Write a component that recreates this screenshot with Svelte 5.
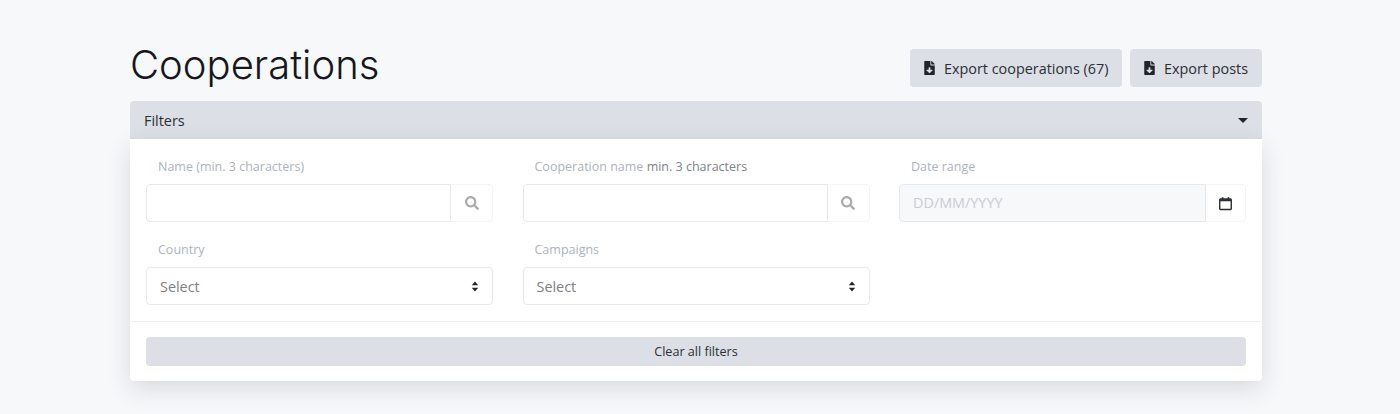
<script>
  const exportButtons = ["Export cooperations (67)", "Export posts"];
</script>

{#snippet fileIcon()}
  <svg class="file-icon" viewBox="0 0 384 512" aria-hidden="true">
    <path d="M224 136V0H24C10.700 0 0 10.700 0 24v464c0 13.300 10.700 24 24 24h336c13.300 0 24-10.700 24-24V160H248c-13.200 0-24-10.800-24-24zm76.450 211.360l-96.420 95.700c-6.650 6.610-17.390 6.610-24.040 0l-96.420-95.700C73.420 337.290 80.540 320 94.820 320H160v-80c0-8.840 7.160-16 16-16h32c8.840 0 16 7.160 16 16v80h65.180c14.280 0 21.400 17.290 11.270 27.360zM377 105L279.100 7c-4.500-4.500-10.600-7-17-7H256v128h128v-6.100c0-6.300-2.500-12.400-7-16.900z" />
  </svg>
{/snippet}

{#snippet searchIcon()}
  <svg class="search-icon" viewBox="0 0 512 512" aria-hidden="true">
    <path d="M505 442.700L405.300 343c-4.500-4.500-10.600-7-17-7H372c27.600-35.300 44-79.700 44-128C416 93.100 322.900 0 208 0S0 93.100 0 208s93.100 208 208 208c48.300 0 92.700-16.400 128-44v16.300c0 6.400 2.500 12.500 7 17l99.700 99.700c9.400 9.400 24.600 9.400 33.900 0l28.300-28.300c9.400-9.400 9.400-24.600.1-34zM208 336c-70.700 0-128-57.200-128-128 0-70.700 57.200-128 128-128 70.700 0 128 57.200 128 128 0 70.700-57.200 128-128 128z" />
  </svg>
{/snippet}

{#snippet sortIcon()}
  <svg class="sort-icon" viewBox="0 0 8 12" aria-hidden="true">
    <path d="M4 0.500 7.500 4.600H0.500zM4 11.500 0.500 7.400H7.500z" />
  </svg>
{/snippet}

<main class="page">
  <header class="top">
    <h1>Cooperations</h1>
    <div class="actions">
      {#each exportButtons as label}
        <button class="export">
          {@render fileIcon()}
          <span>{label}</span>
        </button>
      {/each}
    </div>
  </header>

  <button class="filters-bar">
    <span>Filters</span>
    <i class="caret"></i>
  </button>

  <section class="card">
    <div class="fields">
      <div class="field">
        <span class="label">Name (min. 3 characters)</span>
        <div class="group">
          <div class="input"></div>
          <div class="addon">{@render searchIcon()}</div>
        </div>
      </div>
      <div class="field">
        <span class="label">Cooperation name <em>min. 3 characters</em></span>
        <div class="group">
          <div class="input"></div>
          <div class="addon">{@render searchIcon()}</div>
        </div>
      </div>
      <div class="field">
        <span class="label">Date range</span>
        <div class="group">
          <div class="input disabled">DD/MM/YYYY</div>
          <div class="addon date">
            <svg class="calendar" viewBox="0 0 14 15" aria-hidden="true">
              <path d="M1.500 2.700H12.500A.8.8 0 0 1 13.200 3.500V13.200A.8.8 0 0 1 12.500 14H1.500A.8.8 0 0 1 .8 13.200V3.500A.8.8 0 0 1 1.500 2.700Z" fill="none" stroke="currentColor" stroke-width="1.500" />
              <path d="M1 3H13V5H1ZM3 .8H4.800V3.500H3ZM9.200 .8H11V3.500H9.200Z" fill="currentColor" />
            </svg>
          </div>
        </div>
      </div>
      <div class="field">
        <span class="label">Country</span>
        <div class="select"><span>Select</span>{@render sortIcon()}</div>
      </div>
      <div class="field">
        <span class="label">Campaigns</span>
        <div class="select"><span>Select</span>{@render sortIcon()}</div>
      </div>
    </div>
    <div class="footer">
      <button class="clear">Clear all filters</button>
    </div>
  </section>
</main>

<style>
  :global(body) {
    background: #f7f8fa;
    font-family: "Open Sans", sans-serif;
    color: #212529;
  }

  .page {
    box-sizing: border-box;
    width: 1132px;
    height: 414px;
    margin-left: 130px;
    padding-top: 41px;
  }

  .top {
    display: flex;
    justify-content: space-between;
    align-items: flex-start;
    height: 60px;
  }

  h1 {
    margin: 0;
    font-family: "Inter", sans-serif;
    font-size: 40px;
    line-height: 48px;
    font-weight: 300;
    color: #15171c;
  }

  .actions {
    display: flex;
    gap: 8px;
    padding-top: 8px;
  }

  button {
    border: 0;
    font-family: inherit;
    color: inherit;
    background: #dcdfe6;
    border-radius: 4px;
  }

  .export {
    display: flex;
    align-items: center;
    gap: 8.500px;
    height: 38px;
    padding: 0 14px;
    font-size: 14.400px;
    color: #2b2f35;
  }

  .file-icon {
    width: 11px;
    height: 14px;
    fill: #212529;
  }

  .filters-bar {
    display: flex;
    justify-content: space-between;
    align-items: center;
    width: 100%;
    height: 38px;
    padding: 0 14px;
    font-size: 14.400px;
    color: #2b2f35;
    border-radius: 4px 4px 0 0;
  }

  .caret {
    width: 0;
    height: 0;
    border-left: 5px solid transparent;
    border-right: 5px solid transparent;
    border-top: 5px solid #212529;
  }

  .card {
    height: 242px;
    box-sizing: border-box;
    background: #fff;
    border-radius: 0 0 4px 4px;
    box-shadow: 0 8px 24px rgba(30, 40, 60, 0.14);
    padding-top: 18px;
  }

  .fields {
    display: grid;
    grid-template-columns: repeat(3, 347px);
    column-gap: 29.500px;
    grid-template-rows: 83px 65px;
    padding: 0 16px;
    height: 164px;
    border-bottom: 1px solid #edeef1;
  }

  .label {
    display: block;
    height: 27px;
    padding-left: 12px;
    font-size: 12.500px;
    line-height: 20px;
    color: #adb2bc;
  }

  .label em {
    font-style: normal;
    color: #7d828b;
  }

  .group {
    display: flex;
    height: 38px;
  }

  .input {
    flex: 1;
    box-sizing: border-box;
    border: 1px solid #e6e8ec;
    border-radius: 4px 0 0 4px;
    padding: 0 13px;
    font-size: 14.400px;
    line-height: 36px;
  }

  .input.disabled {
    background: #f7f8fa;
    color: #c9ccd2;
  }

  .addon {
    display: flex;
    align-items: center;
    justify-content: center;
    box-sizing: border-box;
    width: 41.800px;
    border: 1px solid #f4f5f7;
    border-left: 0;
    border-radius: 0 4px 4px 0;
  }

  .addon.date {
    width: 40px;
  }

  .search-icon {
    width: 14px;
    height: 14px;
    fill: #a9abad;
  }

  .calendar {
    width: 13px;
    height: 15px;
    color: #2a2d33;
  }

  .select {
    display: flex;
    justify-content: space-between;
    align-items: center;
    box-sizing: border-box;
    height: 38px;
    padding: 0 13px;
    border: 1px solid #e6e8ec;
    border-radius: 4px;
    font-size: 14.400px;
    color: #7e8085;
  }

  .sort-icon {
    width: 8px;
    height: 11px;
    fill: #212529;
  }

  .footer {
    padding: 15px 16px 0;
  }

  .clear {
    display: block;
    width: 100%;
    height: 29px;
    font-size: 12.600px;
    color: #2b2f35;
  }
</style>
